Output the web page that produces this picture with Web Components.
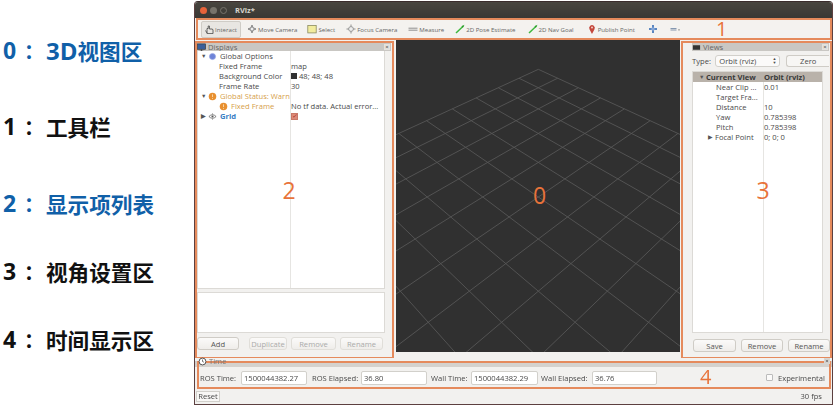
<!DOCTYPE html>
<html>
<head>
<meta charset="utf-8">
<title>RViz</title>
<style>
html, body { margin: 0; padding: 0; background: #fff; }
body { display: flex; width: 837px; height: 408px; overflow: hidden; font-family: "Open Sans", "Noto Sans", sans-serif; }
</style>
</head>
<body>
<rv-legend>
    <rv-legend-item num="0" color="#1060a8"><span style="font:bold 24px 'Open Sans',sans-serif">3D</span>视图区</rv-legend-item>
    <rv-legend-item num="1" color="#111">工具栏</rv-legend-item>
    <rv-legend-item num="2" color="#1060a8">显示项列表</rv-legend-item>
    <rv-legend-item num="3" color="#111">视角设置区</rv-legend-item>
    <rv-legend-item num="4" color="#111">时间显示区</rv-legend-item>
</rv-legend>

<rv-window>
    <rv-titlebar title="RViz*"></rv-titlebar>
    <rv-toolbar>
        <rv-tool active style="margin-left:3px" icon="hand">Interact</rv-tool>
        <rv-tool icon="move" style="margin-left:6px">Move Camera</rv-tool>
        <rv-tool icon="select" style="margin-left:10px">Select</rv-tool>
        <rv-tool icon="focus" style="margin-left:11px">Focus Camera</rv-tool>
        <rv-tool icon="measure" style="margin-left:11px">Measure</rv-tool>
        <rv-tool icon="pose" style="margin-left:11px">2D Pose Estimate</rv-tool>
        <rv-tool icon="pose" style="margin-left:12px">2D Nav Goal</rv-tool>
        <rv-tool icon="pin" style="margin-left:13px">Publish Point</rv-tool>
        <rv-tool icon="plus" style="margin-left:13px"></rv-tool>
        <rv-tool icon="minus" style="margin-left:12px"></rv-tool>
    </rv-toolbar>
    <rv-main>
        <rv-panel slot="left" title="Displays" icon="monitor" num="2" style="width:199px">
            <rv-tree divider="92" flat style="height:238px">
                <rv-row indent="3" arrow="down" icon="globe" value="">Global Options</rv-row>
                <rv-row indent="21" value="map">Fixed Frame</rv-row>
                <rv-row indent="21" value="48; 48; 48" swatch>Background Color</rv-row>
                <rv-row indent="21" value="30">Frame Rate</rv-row>
                <rv-row indent="3" arrow="down" icon="warn" tone="warn" value="">Global Status: Warn</rv-row>
                <rv-row indent="21" icon="warn" tone="warn" value="No tf data.  Actual error...">Fixed Frame</rv-row>
                <rv-row indent="3" arrow="right" icon="eye" tone="link" check value="">Grid</rv-row>
            </rv-tree>
            <rv-blank></rv-blank>
            <rv-buttons>
                <rv-button width="42">Add</rv-button>
                <rv-button width="38" off style="margin-left:10px">Duplicate</rv-button>
                <rv-button width="45" off style="margin-left:4px">Remove</rv-button>
                <rv-button width="43" off style="margin-left:4px">Rename</rv-button>
            </rv-buttons>
        </rv-panel>
        <rv-viewport num="0"></rv-viewport>
        <rv-panel slot="right" title="Views" icon="camera" num="3" inset="9" style="width:151px">
            <rv-type-row></rv-type-row>
            <rv-tree divider="70" style="height:262px;margin-top:4px">
                <rv-row indent="6" arrow="down" tone="head" value="Orbit (rviz)">Current View</rv-row>
                <rv-row indent="23" value="0.01">Near Clip ...</rv-row>
                <rv-row indent="23" value="&lt;Fixed Frame&gt;">Target Fra...</rv-row>
                <rv-row indent="23" value="10">Distance</rv-row>
                <rv-row indent="23" value="0.785398">Yaw</rv-row>
                <rv-row indent="23" value="0.785398">Pitch</rv-row>
                <rv-row indent="15" arrow="right" value="0; 0; 0">Focal Point</rv-row>
            </rv-tree>
            <rv-buttons style="margin-top:6px;margin-left:1px">
                <rv-button width="43">Save</rv-button>
                <rv-button width="42" style="margin-left:5px">Remove</rv-button>
                <rv-button width="42" style="margin-left:5px">Rename</rv-button>
            </rv-buttons>
        </rv-panel>
    </rv-main>
    <rv-time></rv-time>
</rv-window>

<script>
// small line icons used by the toolbar and the panels
const ICONS = {
    hand: '<path d="M3 9V4.5h1.2V2h1.2v3h3l.6 1v3.6H3z M1.5 6.5 3 9" fill="none" stroke="#555" stroke-width=".9"/>',
    move: '<path d="M5 1v8M1 5h8" stroke="#777" stroke-width=".8"/><circle cx="5" cy="5" r="2" fill="#eee" stroke="#777" stroke-width=".8"/><path d="M1 5l1.4-1.4v2.8zM9 5 7.6 3.6v2.8zM5 1 3.6 2.4h2.8zM5 9 3.6 7.6h2.8z" fill="#777"/>',
    select: '<rect x=".8" y="1.5" width="8.4" height="7.4" fill="#f2ec9e" stroke="#8a8a60" stroke-width=".8"/>',
    focus: '<path d="M5 .5v9M.5 5h9" stroke="#888" stroke-width=".9"/><circle cx="5" cy="5" r="2.4" fill="#eee" stroke="#888" stroke-width=".8"/>',
    measure: '<path d="M.5 4.2h9M.5 6.2h9" stroke="#777" stroke-width=".8"/>',
    pose: '<path d="M1 9 8.4 2" stroke="#3cb83c" stroke-width="1.5"/><path d="M9.5 .8 6.5 2.3l1.3 1.4z" fill="#2a9a2a"/>',
    pin: '<path d="M5 10 2.6 5.4a2.8 2.8 0 1 1 4.8 0z" fill="#c4473c"/><circle cx="5" cy="3.6" r="1" fill="#f3d0c8"/>',
    plus: '<path d="M5 1v8M1 5h8" stroke="#5a86c0" stroke-width="2"/><circle cx="5" cy="5" r="1.8" fill="#88a8d8"/>',
    minus: '<path d="M.5 4.5h6M.5 6h6" stroke="#6a80a0" stroke-width=".8"/><path d="M8 5.4h2L9 6.8z" fill="#666"/>',
    monitor: '<rect x=".5" y="1" width="9" height="6" fill="#3a5f9a" stroke="#333" stroke-width=".7"/><path d="M3 9h4M5 7v2" stroke="#444"/>',
    camera: '<rect x="1" y="2.5" width="8" height="5" fill="#333"/>',
    globe: '<circle cx="5" cy="5" r="3.4" fill="#6d83d8" stroke="#9aa8e4" stroke-width=".8"/>',
    warn: '<circle cx="5" cy="5" r="4.2" fill="#e89030"/><path d="M5 2.6v3M5 6.6v1" stroke="#fbe3c0" stroke-width=".9"/>',
    eye: '<path d="M1 5q4-4 8 0-4 4-8 0z" fill="none" stroke="#555" stroke-width=".8"/><circle cx="5" cy="5" r="1.2" fill="#555"/><path d="M5 1.5v1M5 7.5v1" stroke="#555" stroke-width=".7"/>',
    clock: '<circle cx="5" cy="5" r="3.8" fill="#fff" stroke="#444" stroke-width="1"/><path d="M5 2.8V5l1.6.8" stroke="#444" stroke-width=".8" fill="none"/>'
};

function svgIcon(name, size) {
    return `<svg width="${size}" height="${size}" viewBox="0 0 10 10" style="display:block;flex:none">${ICONS[name] || ''}</svg>`;
}

// base class: every element only has to provide _templateContent
class RvElement extends HTMLElement {
    constructor() {
        super();
        this._shadowRoot = this.attachShadow({ mode: 'open' });
    }

    connectedCallback() {
        const template = document.createElement('template');
        template.innerHTML = this._templateContent();
        this._shadowRoot.appendChild(template.content.cloneNode(true));
    }

    attr(name, fallback) {
        return this.hasAttribute(name) ? this.getAttribute(name) : fallback;
    }
}

class RvLegend extends RvElement {
    _templateContent() {
        return `
            <style>
                :host { display:block; flex:none; width:194px; height:408px; position:relative; }
                .list { display:flex; flex-direction:column; padding:35px 0 0 3px; }
            </style>
            <div class="list"><slot></slot></div>
        `;
    }
}

class RvLegendItem extends RvElement {
    _templateContent() {
        const color = this.attr('color', '#111');
        return `
            <style>
                :host { display:flex; align-items:center; height:30px; color:${color};
                        font:bold 21.6px "Noto Sans CJK SC", sans-serif; white-space:nowrap; }
                :host(:nth-child(1)) { margin-bottom:46px; }
                :host(:nth-child(2)) { margin-bottom:47px; }
                :host(:nth-child(3)) { margin-bottom:38px; }
                :host(:nth-child(4)) { margin-bottom:38px; }
                .num { width:21px; font:bold 23px "Open Sans", sans-serif; }
                .sep { width:22px; font-size:20px; }
            </style>
            <span class="num">${this.attr('num', '')}</span><span class="sep">：</span><span><slot></slot></span>
        `;
    }
}

class RvWindow extends RvElement {
    _templateContent() {
        return `
            <style>
                :host { display:flex; flex-direction:column; flex:none; box-sizing:border-box; width:639px; height:404px; margin-top:1px;
                        background:#f2f1ef; border:1px solid #5c4040; border-top-color:#3a2c2c; border-radius:4px 4px 0 0;
                        font:7.6px "Open Sans", "Noto Sans", sans-serif; color:#4a4a4a; overflow:hidden; filter:blur(.35px); }
            </style>
            <slot></slot>
        `;
    }
}

class RvTitlebar extends RvElement {
    _templateContent() {
        return `
            <style>
                :host { display:flex; align-items:center; flex:none; height:16px; padding-left:5px; gap:3px;
                        background:linear-gradient(#48453f, #3a3834); color:#d8d4cc; font:bold 7.5px "Open Sans", sans-serif; }
                i { width:7px; height:7px; border-radius:50%; background:#77736b; }
                i:first-of-type { background:#e8633a; }
                b { margin-left:5px; font-weight:700; }
            </style>
            <i></i><i></i><i style="background:none;border:1px solid #77736b;box-sizing:border-box"></i><b>${this.attr('title', '')}</b>
        `;
    }
}

class RvToolbar extends RvElement {
    _templateContent() {
        return `
            <style>
                :host { display:flex; align-items:center; flex:none; box-sizing:border-box; height:22px; margin:0 0 0 1px; position:relative;
                        border:2px solid #e58a5c; background:#f4f2ef; font-size:6.1px; color:#666; }
                .num { position:absolute; left:518px; top:-5px; font:20px "Open Sans", sans-serif; color:#e8733a; }
            </style>
            <slot></slot>
            <div class="num">1</div>
        `;
    }
}

class RvTool extends RvElement {
    _templateContent() {
        const active = this.hasAttribute('active');
        return `
            <style>
                :host { display:flex; align-items:center; gap:1px; white-space:nowrap; height:${active ? 17 : 14}px; box-sizing:border-box;
                        ${active ? 'width:40px;padding:0 2px;border:1px solid #cfccc6;border-radius:2px;background:#e8e6e2;' : ''} }
            </style>
            ${svgIcon(this.attr('icon', ''), 10)}<slot></slot>
        `;
    }
}

class RvMain extends RvElement {
    _templateContent() {
        return `
            <style>
                :host { display:flex; flex:none; height:318px; background:#f2f1ef; }
            </style>
            <slot name="left"></slot><slot></slot><slot name="right"></slot>
        `;
    }
}

class RvPanel extends RvElement {
    _templateContent() {
        const inset = this.attr('inset', '0');
        return `
            <style>
                :host { display:flex; flex-direction:column; flex:none; box-sizing:border-box; position:relative; height:318px;
                        margin-top:1px; border:2px solid #e58a5c; padding:0 7px 0 0; padding-left:${inset}px; }
                .head { display:flex; align-items:center; gap:2px; flex:none; height:8px; margin-right:-6px; background:#c9c7c3; color:#666; overflow:hidden; }
                .head span { flex:1; }
                .x { width:6px; height:6px; margin-right:1px; background:#e4e2de; color:#333; font-size:6px; line-height:6px; text-align:center; }
                .num { position:absolute; left:50%; top:131px; transform:translateX(-50%); font:23px "Open Sans", sans-serif; color:#e8733a; }
                :host([num="2"]) .num { left:92px; }
                :host([num="3"]) .num { left:80px; }
            </style>
            <div class="head">${svgIcon(this.attr('icon', ''), 9)}<span>${this.attr('title', '')}</span><div class="x">×</div></div>
            <slot></slot>
            <div class="num">${this.attr('num', '')}</div>
        `;
    }
}

class RvTree extends RvElement {
    _templateContent() {
        const divider = this.attr('divider', '93');
        return `
            <style>
                :host { display:flex; flex-direction:column; flex:none; box-sizing:border-box; position:relative; background:#fff;
                        border:1px solid #dcdad6; --name-w:${divider}px; }
                :host([flat]) { border-top:0; }
                .div { position:absolute; left:${divider}px; top:0; bottom:0; width:1px; background:#e6e5e2; }
            </style>
            <div class="div"></div>
            <slot></slot>
        `;
    }
}

class RvRow extends RvElement {
    _templateContent() {
        const arrow = this.attr('arrow', '');
        const icon = this.attr('icon', '');
        const tone = this.attr('tone', '');
        const indent = this.attr('indent', '0');
        const value = this.attr('value', '');
        const colors = { warn: '#d6a04a', link: '#3a80c4' };
        const arrowChar = arrow === 'down' ? '▼' : arrow === 'right' ? '▶' : '';
        return `
            <style>
                :host { display:flex; align-items:center; flex:none; height:10px; position:relative; white-space:nowrap; z-index:1;
                        ${tone === 'head' ? 'background:#b9b2aa;font-weight:700;color:#3a3a3a;' : ''} }
                .name { display:flex; align-items:center; flex:none; box-sizing:border-box; width:var(--name-w); padding-left:${indent}px; gap:1px;
                        ${colors[tone] ? 'color:' + colors[tone] + ';' : ''} ${tone === 'link' ? 'font-weight:700;' : ''}
                        overflow:hidden; }
                .arrow { flex:none; width:6px; font-size:5.5px; color:#555; }
                .val { display:flex; align-items:center; gap:2px; padding-left:1px; }
                .sw { width:6px; height:6px; background:#303030; }
                .chk { width:7px; height:7px; background:#dc8a78; border:1px solid #c87868; box-sizing:border-box; color:#a02a20; font-size:6px; line-height:5px; }
                svg { margin-right:2px; }
            </style>
            <div class="name">${arrowChar ? `<span class="arrow">${arrowChar}</span>` : ''}${icon ? svgIcon(icon, 9) : ''}<span><slot></slot></span></div>
            <div class="val">${this.hasAttribute('swatch') ? '<i class="sw"></i>' : ''}${this.hasAttribute('check') ? '<i class="chk">✓</i>' : ''}${value}</div>
        `;
    }
}

class RvBlank extends RvElement {
    _templateContent() {
        return `
            <style>
                :host { display:block; flex:none; box-sizing:border-box; height:41px; margin-top:3px; background:#fff; border:1px solid #dcdad6; }
            </style>
        `;
    }
}

class RvButtons extends RvElement {
    _templateContent() {
        return `
            <style>
                :host { display:flex; flex:none; margin-top:4px; }
            </style>
            <slot></slot>
        `;
    }
}

class RvButton extends RvElement {
    _templateContent() {
        const off = this.hasAttribute('off');
        return `
            <style>
                :host { display:flex; align-items:center; justify-content:center; flex:none; box-sizing:border-box;
                        width:${this.attr('width', '40')}px; height:13px; border:1px solid ${off ? '#e0ded9' : '#cfccc6'}; border-radius:3px;
                        background:linear-gradient(#fbfaf9, #efedea); color:${off ? '#aaa' : '#555'}; white-space:nowrap; }
            </style>
            <slot></slot>
        `;
    }
}

class RvTypeRow extends RvElement {
    _templateContent() {
        return `
            <style>
                :host { display:flex; align-items:center; flex:none; height:12px; margin-top:4px; margin-right:-6px; }
                .lbl { width:24px; }
                .combo { display:flex; align-items:center; justify-content:space-between; box-sizing:border-box; width:67px; height:12px; padding:0 3px; background:#fbfaf9;
                         border:1px solid #d2d0cb; border-radius:3px; }
                .zero { display:flex; align-items:center; justify-content:center; box-sizing:border-box; width:44px; height:12px; margin-left:6px;
                        border:1px solid #cfccc6; border-radius:3px 0 0 3px; border-right:0; background:#f7f6f4; }
                .spin { font-size:4px; line-height:4px; text-align:center; }
            </style>
            <span class="lbl">Type:</span>
            <div class="combo"><span>Orbit (rviz)</span><span class="spin">▲<br>▼</span></div>
            <div class="zero">Zero</div>
        `;
    }
}

class RvViewport extends RvElement {
    _gridLines() {
        // perspective grid: far corner at the top, worked out from the crossings on the centre line
        const pt = (u, v) => {
            const w = 1 / (0.001269 - 0.0000415 * (u + v));
            return [(430 + 0.0712 * (u - v) * w).toFixed(1), (w - 700).toFixed(1)];
        };
        let d = '';
        for (let i = 0; i <= 10; i++) {
            d += `M${pt(i, 0)}L${pt(i, 10)}M${pt(0, i)}L${pt(10, i)}`;
        }
        return d;
    }

    _templateContent() {
        return `
            <style>
                :host { display:block; flex:none; position:relative; width:284px; height:312px; margin:0 1px 0 2px; background:#303030; overflow:hidden; }
                svg { display:block; }
                .num { position:absolute; left:137px; top:139px; font:23px "Open Sans", sans-serif; color:#e8733a; }
            </style>
            <svg width="284" height="312" viewBox="3 0 852 936"><path d="${this._gridLines()}" fill="none" stroke="#585858" stroke-width="2.6"/></svg>
            <div class="num">${this.attr('num', '')}</div>
        `;
    }
}

class RvTime extends RvElement {
    _field(label, value, labelW, inputW) {
        return `<span style="width:${labelW}px">${label}</span><span class="inp" style="width:${inputW}px">${value}</span>`;
    }

    _templateContent() {
        return `
            <style>
                :host { display:flex; flex-direction:column; flex:1; position:relative; }
                .title { position:absolute; left:3px; top:-2px; display:flex; gap:2px; align-items:center; color:#777; z-index:1; }
                .x { position:absolute; right:2px; top:0; width:6px; height:6px; background:#d8d6d2; color:#333; font-size:6px; line-height:6px; text-align:center; z-index:2; }
                .band { height:9px; background:linear-gradient(#f2f1ef 0 3px, #cfcdc9 3px); }
                .box { display:flex; align-items:center; flex:none; box-sizing:border-box; height:28px; margin:-6px 1px 0 2px; padding:5px 0 0 1px;
                       border:2px solid #e58a5c; position:relative; white-space:nowrap; background:linear-gradient(#d4d2ce 0 4px, #f2f1ef 4px); }
                .inp { box-sizing:border-box; height:14px; line-height:12px; padding-left:2px; flex:none; background:#fff; border:1px solid #d2d0cb; border-radius:2px; }
                .num { position:absolute; left:501px; top:0; font:20px "Open Sans", sans-serif; line-height:28px; color:#e8733a; }
                .chk { width:7px; height:7px; box-sizing:border-box; margin-left:109px; background:#fbfaf9; border:1px solid #bbb; border-radius:1px; flex:none; }
                .status { display:flex; align-items:center; justify-content:space-between; flex:1; padding:0 10px 1px 1px; }
                .reset { box-sizing:border-box; width:24px; height:11px; line-height:9px; text-align:center; background:#f8f7f5; border:1px solid #d2d0cb; }
            </style>
            <div class="title">${svgIcon('clock', 9)}<span>Time</span></div>
            <div class="x">×</div>
            <div class="band"></div>
            <div class="box">
                ${this._field('ROS Time:', '1500044382.27', 41, 66)}
                <span style="width:5px"></span>
                ${this._field('ROS Elapsed:', '36.80', 49, 66)}
                <span style="width:4px"></span>
                ${this._field('Wall Time:', '1500044382.29', 40, 67)}
                <span style="width:3px"></span>
                ${this._field('Wall Elapsed:', '36.76', 51, 65)}
                <i class="chk"></i><span style="margin-left:5px">Experimental</span>
                <div class="num">4</div>
            </div>
            <div class="status"><div class="reset">Reset</div><span>30 fps</span></div>
        `;
    }
}

customElements.define('rv-legend', RvLegend);
customElements.define('rv-legend-item', RvLegendItem);
customElements.define('rv-window', RvWindow);
customElements.define('rv-titlebar', RvTitlebar);
customElements.define('rv-toolbar', RvToolbar);
customElements.define('rv-tool', RvTool);
customElements.define('rv-main', RvMain);
customElements.define('rv-panel', RvPanel);
customElements.define('rv-tree', RvTree);
customElements.define('rv-row', RvRow);
customElements.define('rv-blank', RvBlank);
customElements.define('rv-buttons', RvButtons);
customElements.define('rv-button', RvButton);
customElements.define('rv-type-row', RvTypeRow);
customElements.define('rv-viewport', RvViewport);
customElements.define('rv-time', RvTime);
</script>
</body>
</html>
